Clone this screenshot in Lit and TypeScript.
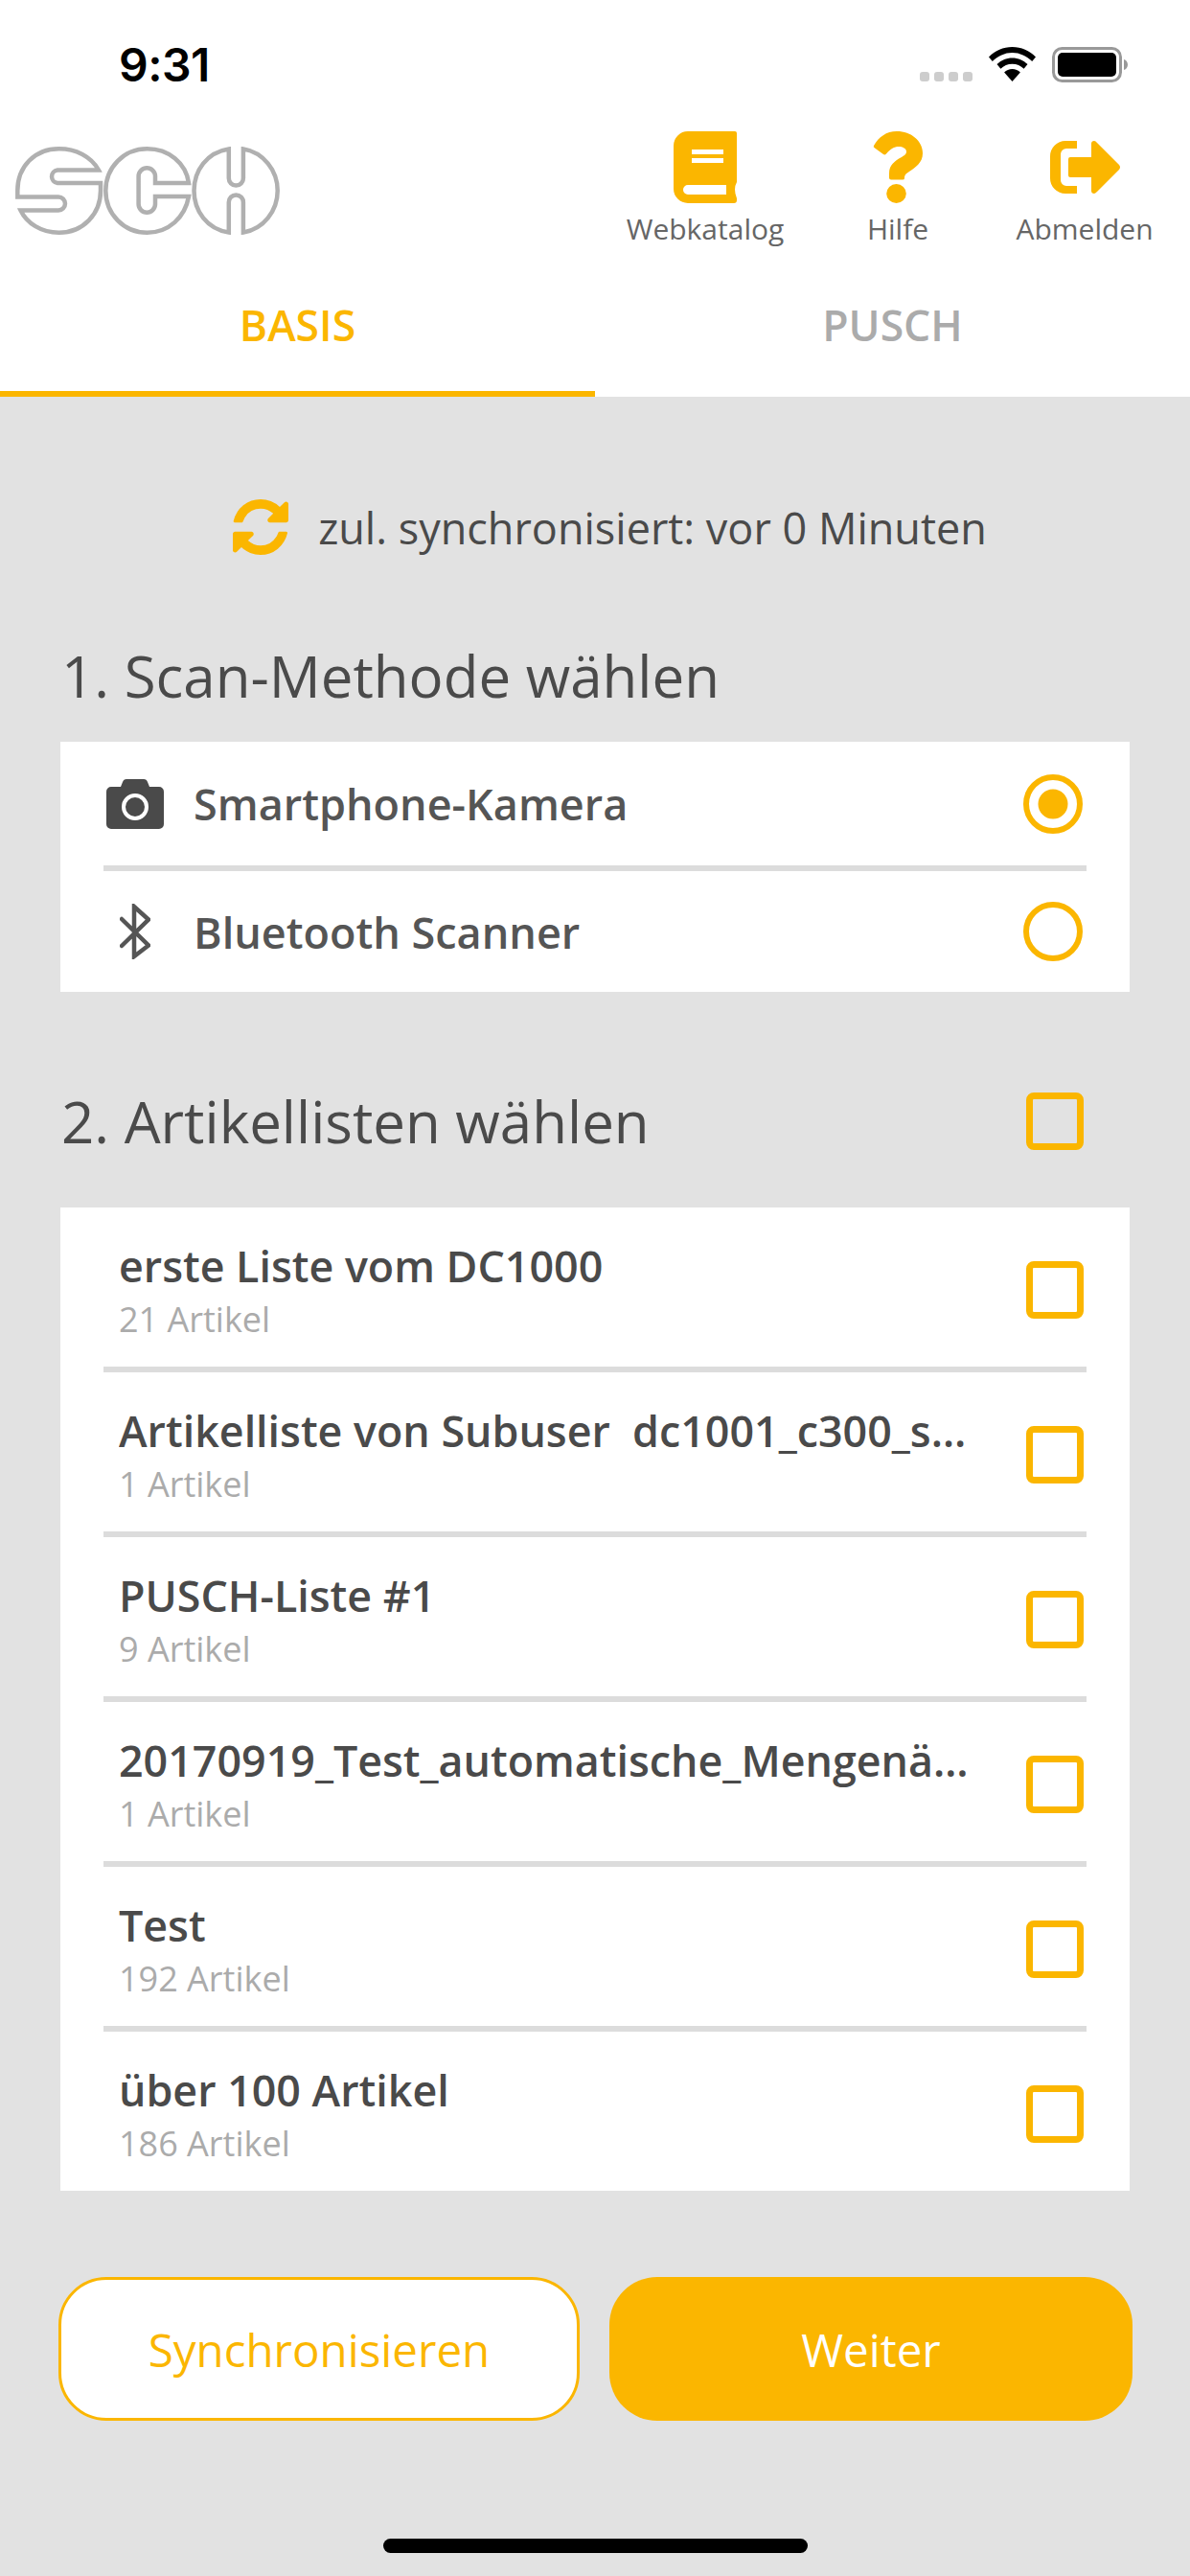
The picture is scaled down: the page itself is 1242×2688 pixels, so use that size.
import { LitElement, html, css, svg } from "lit";
import { customElement } from "lit/decorators.js";

const LISTS = [
  ["erste Liste vom DC1000", "21 Artikel"],
  ["Artikelliste von Subuser  dc1001_c300_subuser_liste", "1 Artikel"],
  ["PUSCH-Liste #1", "9 Artikel"],
  ["20170919_Test_automatische_Mengenänderung", "1 Artikel"],
  ["Test", "192 Artikel"],
  ["über 100 Artikel", "186 Artikel"],
];

@customElement("app-root")
export class AppRoot extends LitElement {
  static styles = css`
    :host {
      display: block;
      width: 1242px;
      height: 2688px;
      overflow: hidden;
      background: #e2e2e2;
      font-family: "Open Sans", "Noto Sans", sans-serif;
      color: #4a4a4a;
    }
    svg { display: block; flex: none; }
    .top { background: #fff; height: 414px; display: flex; flex-direction: column; }
    .status { height: 137px; display: flex; align-items: flex-start; padding: 0 64px 0 124px; box-sizing: border-box; }
    .time { font-family: Inter, Roboto, sans-serif; font-weight: 600; font-size: 48px; line-height: 50px; margin-top: 43px; color: #000; letter-spacing: -0.5px; }
    .status-right { margin-left: auto; display: flex; align-items: flex-start; margin-top: 49px; }
    .dots { display: flex; gap: 5px; margin-top: 26px; margin-right: 17px; }
    .dots i { width: 10px; height: 10px; border-radius: 3px; background: #cdcdcd; }
    .wifi { margin-right: 17px; }
    .head { display: flex; height: 153px; padding-left: 16px; position: relative; }
    .logo { margin-top: 16px; }
    .actions { margin-left: auto; display: flex; }
    .action { display: flex; flex-direction: column; align-items: center; position: relative; width: 200px; font-size: 30px; color: #666; line-height: 40px; }
    .action .ic { height: 75px; display: flex; align-items: center; margin-bottom: 7px; }
    .a1 { margin-right: 16px; }
    .a2 { width: 170px; }
    .a3 { width: 220px; }
    .tabs { display: flex; flex: 1; }
    .tab { flex: 1; display: flex; justify-content: center; align-items: flex-start; font-size: 44.5px; font-weight: 600; line-height: 58px; padding-top: 20px; color: #ababab; box-sizing: border-box; }
    .tab.on { color: #fbb600; border-bottom: 6px solid #fbb600; }
    .sync { height: 80px; margin-top: 96px; display: flex; align-items: center; justify-content: center; gap: 31px; font-size: 45px; padding-left: 31px; }
    .sec { display: flex; align-items: center; justify-content: space-between; margin: 0 111px 0 64px; font-size: 60px; }
    .s1 { height: 80px; margin-top: 75px; margin-bottom: 29px; }
    .s2 { height: 60px; margin-top: 105px; margin-bottom: 60px; }
    .card { background: #fff; margin: 0 63px; }
    .row { display: flex; align-items: center; margin: 0 45px; box-sizing: border-box; border-bottom: 6px solid #dcdcdc; }
    .row:last-child { border-bottom: 0; }
    .m { font-size: 45px; font-weight: 600; color: #555; }
    .m1 { height: 135px; }
    .m2 { height: 126px; }
    .m .icon { width: 94px; padding-left: 3px; box-sizing: border-box; }
    .radio { margin-left: auto; margin-right: 4px; }
    .l { height: 172px; padding-left: 16px; padding-bottom: 0; align-items: flex-start; }
    .l:last-child { height: 166px; }
    .txt { width: 892px; padding-top: 31px; }
    .tt { font-size: 44.8px; font-weight: 600; line-height: 60px; white-space: pre; overflow: hidden; text-overflow: ellipsis; }
    .st { font-size: 36px; line-height: 48px; margin-top: 2px; color: #ababab; }
    .box { width: 60px; height: 60px; box-sizing: border-box; border: 7px solid #fbb600; border-radius: 8px; flex: none; }
    .l .box { margin-left: auto; margin-right: 3px; margin-top: 56px; }
    .btns { display: flex; gap: 31px; margin: 90px 60px 0 61px; }
    .btn { flex: 1; height: 150px; border-radius: 50px; box-sizing: border-box; display: flex; align-items: center; justify-content: center; font-size: 47.5px; }
    .b1 { flex: 0 0 544px; background: #fff; border: 3px solid #fbb600; color: #fbb600; }
    .b2 { background: #fbb600; color: #fff; }
    .home { width: 443px; height: 15px; border-radius: 8px; background: #000; margin: 123px auto 0 400px; }
  `;

  private check() { return html`<div class="box"></div>`; }

  private radio(on: boolean) {
    return html`<svg class="radio" width="62" height="62" viewBox="0 0 62 62">
      <circle cx="31" cy="31" r="28" fill="none" stroke="#fbb600" stroke-width="6"></circle>
      ${on ? svg`<circle cx="31" cy="31" r="15.5" fill="#fbb600"></circle>` : ""}
    </svg>`;
  }

  render() {
    return html`
      <div class="top">
        <div class="status">
          <div class="time">9:31</div>
          <div class="status-right">
            <div class="dots"><i></i><i></i><i></i><i></i></div>
            <svg class="wifi" width="49" height="36" viewBox="0 0 49 36">
              <path d="M24.5 0C15 0 6.6 3.8 0 10.5l3.8 4.6C9.6 9.4 16.6 6 24.5 6s14.9 3.4 20.7 9.1l3.8-4.6C42.4 3.8 34 0 24.5 0Z" fill="#000"></path>
              <path d="M24.5 11.5c-6.2 0-11.7 2.5-16 6.6l3.9 4.6c3.2-3.1 7.4-5 12.1-5s8.9 1.9 12.1 5l3.9-4.6c-4.3-4.1-9.8-6.6-16-6.6Z" fill="#000"></path>
              <path d="M24.5 23c-3.3 0-6.2 1.3-8.4 3.4L24.5 36l8.4-9.6C30.7 24.3 27.800 23 24.500 23Z" fill="#000"></path>
            </svg>
            <svg width="80" height="37" viewBox="0 0 80 37">
              <rect x="1.500" y="1.500" width="70" height="34" rx="9" fill="none" stroke="#999" stroke-width="3"></rect>
              <rect x="6" y="6" width="61" height="25" rx="5" fill="#000"></rect>
              <path d="M75 13c2.500 .6 4 3 4 5.500s-1.500 4.900-4 5.500Z" fill="#999"></path>
            </svg>
          </div>
        </div>
        <div class="head">
          <svg class="logo" width="276" height="92" viewBox="0 0 276 92" fill="none" stroke="#b0b0b0" stroke-width="4.500">
            <path d="M87 24.500C79 10 63 2.300 45.500 2.300 20 2.300 2.300 21 2.300 46V52.500H45A7 7 0 0 1 45 66.500H5.500C12 80 27 89.700 45.500 89.700 71 89.700 89 70 89 46V38H44A6.800 6.800 0 0 1 44 24.500Z"></path>
            <path d="M181 38C178 17 160 2.300 137.500 2.300 113 2.300 94.300 22 94.300 46S113 89.700 137.500 89.700C160 89.700 177 74 181 52H146V60A8.700 8.700 0 0 1 128.600 60V31A8.700 8.700 0 0 1 146 31V38Z"></path>
            <path d="M222.800 2.500C200 6 186.500 25 186.500 46S200 86 222.800 89.500V58A7.500 7.500 0 0 1 237.900 58V89.500C259 86 273.700 67 273.700 46S259 6 237.900 2.500V33A7.500 7.500 0 0 1 222.800 33Z"></path>
          </svg>
          <div class="actions">
            <div class="action a1"><div class="ic">
              <svg width="66" height="75" viewBox="0 0 66 75">
                <path fill="#fbb600" d="M15 0H64a2 2 0 0 1 2 2V53Q62 60 66 70V72a3 3 0 0 1-3 3H15A15 15 0 0 1 0 60V15A15 15 0 0 1 15 0Z"></path>
                <path fill="#fff" d="M19 19H52V24H19ZM19 28H52V33H19ZM15 56H55V66H15a5 5 0 0 1 0-10Z"></path>
              </svg></div>Webkatalog</div>
            <div class="action a2"><div class="ic">
              <svg width="52" height="75" viewBox="0 0 52 75">
                <path fill="#fbb600" d="M1 15C6 6 14 0 25 0 40 0 52 10 52 23 52 33 44 38 38 42 34 44.500 33 46 33 49Q33 50.500 31 50.500H19Q17 50.500 17 48.500V44C17 35 23 31 29 27.500 33 25 35 24 35 21 35 18 31 16 27 16 22 16 19 18 14 23.500Q12.500 25 11 24L2 17.500Q0 16 1 15Z"></path>
                <ellipse cx="24.500" cy="65" rx="10.300" ry="10" fill="#fbb600"></ellipse>
              </svg></div>Hilfe</div>
            <div class="action a3"><div class="ic">
              <svg width="73" height="55" viewBox="0 0 73 55">
                <path fill="#fbb600" d="M28 0H16A16 16 0 0 0 0 16V39A16 16 0 0 0 16 55H28V47H17A6 6 0 0 1 11 41V14A6 6 0 0 1 17 8H28Z"></path>
                <path fill="#fbb600" d="M19 19Q19 17 21 17H43V3Q43 0 46 0 47.500 0 49 2L72 25Q74 27.500 72 30L49 53Q47 55 46 55 43 55 43 52V38H21Q19 38 19 36Z"></path>
              </svg></div>Abmelden</div>
          </div>
        </div>
        <div class="tabs">
          <div class="tab on">BASIS</div>
          <div class="tab">PUSCH</div>
        </div>
      </div>

      <div class="sync">
        <svg width="58" height="58" viewBox="128 128 1536 1536"><path fill="#fbb600" d="M1639 1056q0 5-1 7-64 268-268 434.500t-478 166.500q-146 0-282.500-55t-243.500-157l-129 129q-19 19-45 19t-45-19-19-45v-448q0-26 19-45t45-19h448q26 0 45 19t19 45-19 45l-137 137q71 66 161 102t187 36q134 0 250-65t186-179q11-17 53-117 8-23 30-23h192q13 0 22.500 9.500t9.500 22.500zm25-800v448q0 26-19 45t-45 19h-448q-26 0-45-19t-19-45 19-45l138-138q-148-137-349-137-134 0-250 65t-186 179q-11 17-53 117-8 23-30 23h-199q-13 0-22.500-9.500t-9.500-22.500v-7q65-268 270-434.500t480-166.500q146 0 284 55.500t245 156.500l130-129q19-19 45-19t45 19 19 45z"></path></svg>
        <span>zul. synchronisiert: vor 0 Minuten</span>
      </div>

      <div class="sec s1"><span>1. Scan-Methode wählen</span></div>
      <div class="card">
        <div class="row m m1">
          <div class="icon">
            <svg width="60" height="52" viewBox="0 0 60 52">
              <path fill="#4a4a4a" d="M5 8H15L17 3Q18 0 21 0H39Q42 0 43 3L45 8H55A5 5 0 0 1 60 13V47A5 5 0 0 1 55 52H5A5 5 0 0 1 0 47V13A5 5 0 0 1 5 8Z"></path>
              <circle cx="30" cy="29" r="12" fill="none" stroke="#fff" stroke-width="4"></circle>
            </svg>
          </div>
          <span>Smartphone-Kamera</span>
          ${this.radio(true)}
        </div>
        <div class="row m m2">
          <div class="icon">
            <svg style="margin-left:14px" width="32" height="58" viewBox="0 0 32 58" fill="none" stroke="#555" stroke-width="4.500" stroke-linejoin="miter" stroke-linecap="round">
              <path d="M2 16L30 43.500 15 55V3L30 16.500 2 44"></path>
            </svg>
          </div>
          <span>Bluetooth Scanner</span>
          ${this.radio(false)}
        </div>
      </div>

      <div class="sec s2"><span>2. Artikellisten wählen</span>${this.check()}</div>
      <div class="card">
        ${LISTS.map(
          ([t, s]) => html`<div class="row l">
            <div class="txt"><div class="tt">${t}</div><div class="st">${s}</div></div>
            ${this.check()}
          </div>`
        )}
      </div>

      <div class="btns">
        <div class="btn b1">Synchronisieren</div>
        <div class="btn b2">Weiter</div>
      </div>
      <div class="home"></div>
    `;
  }
}
